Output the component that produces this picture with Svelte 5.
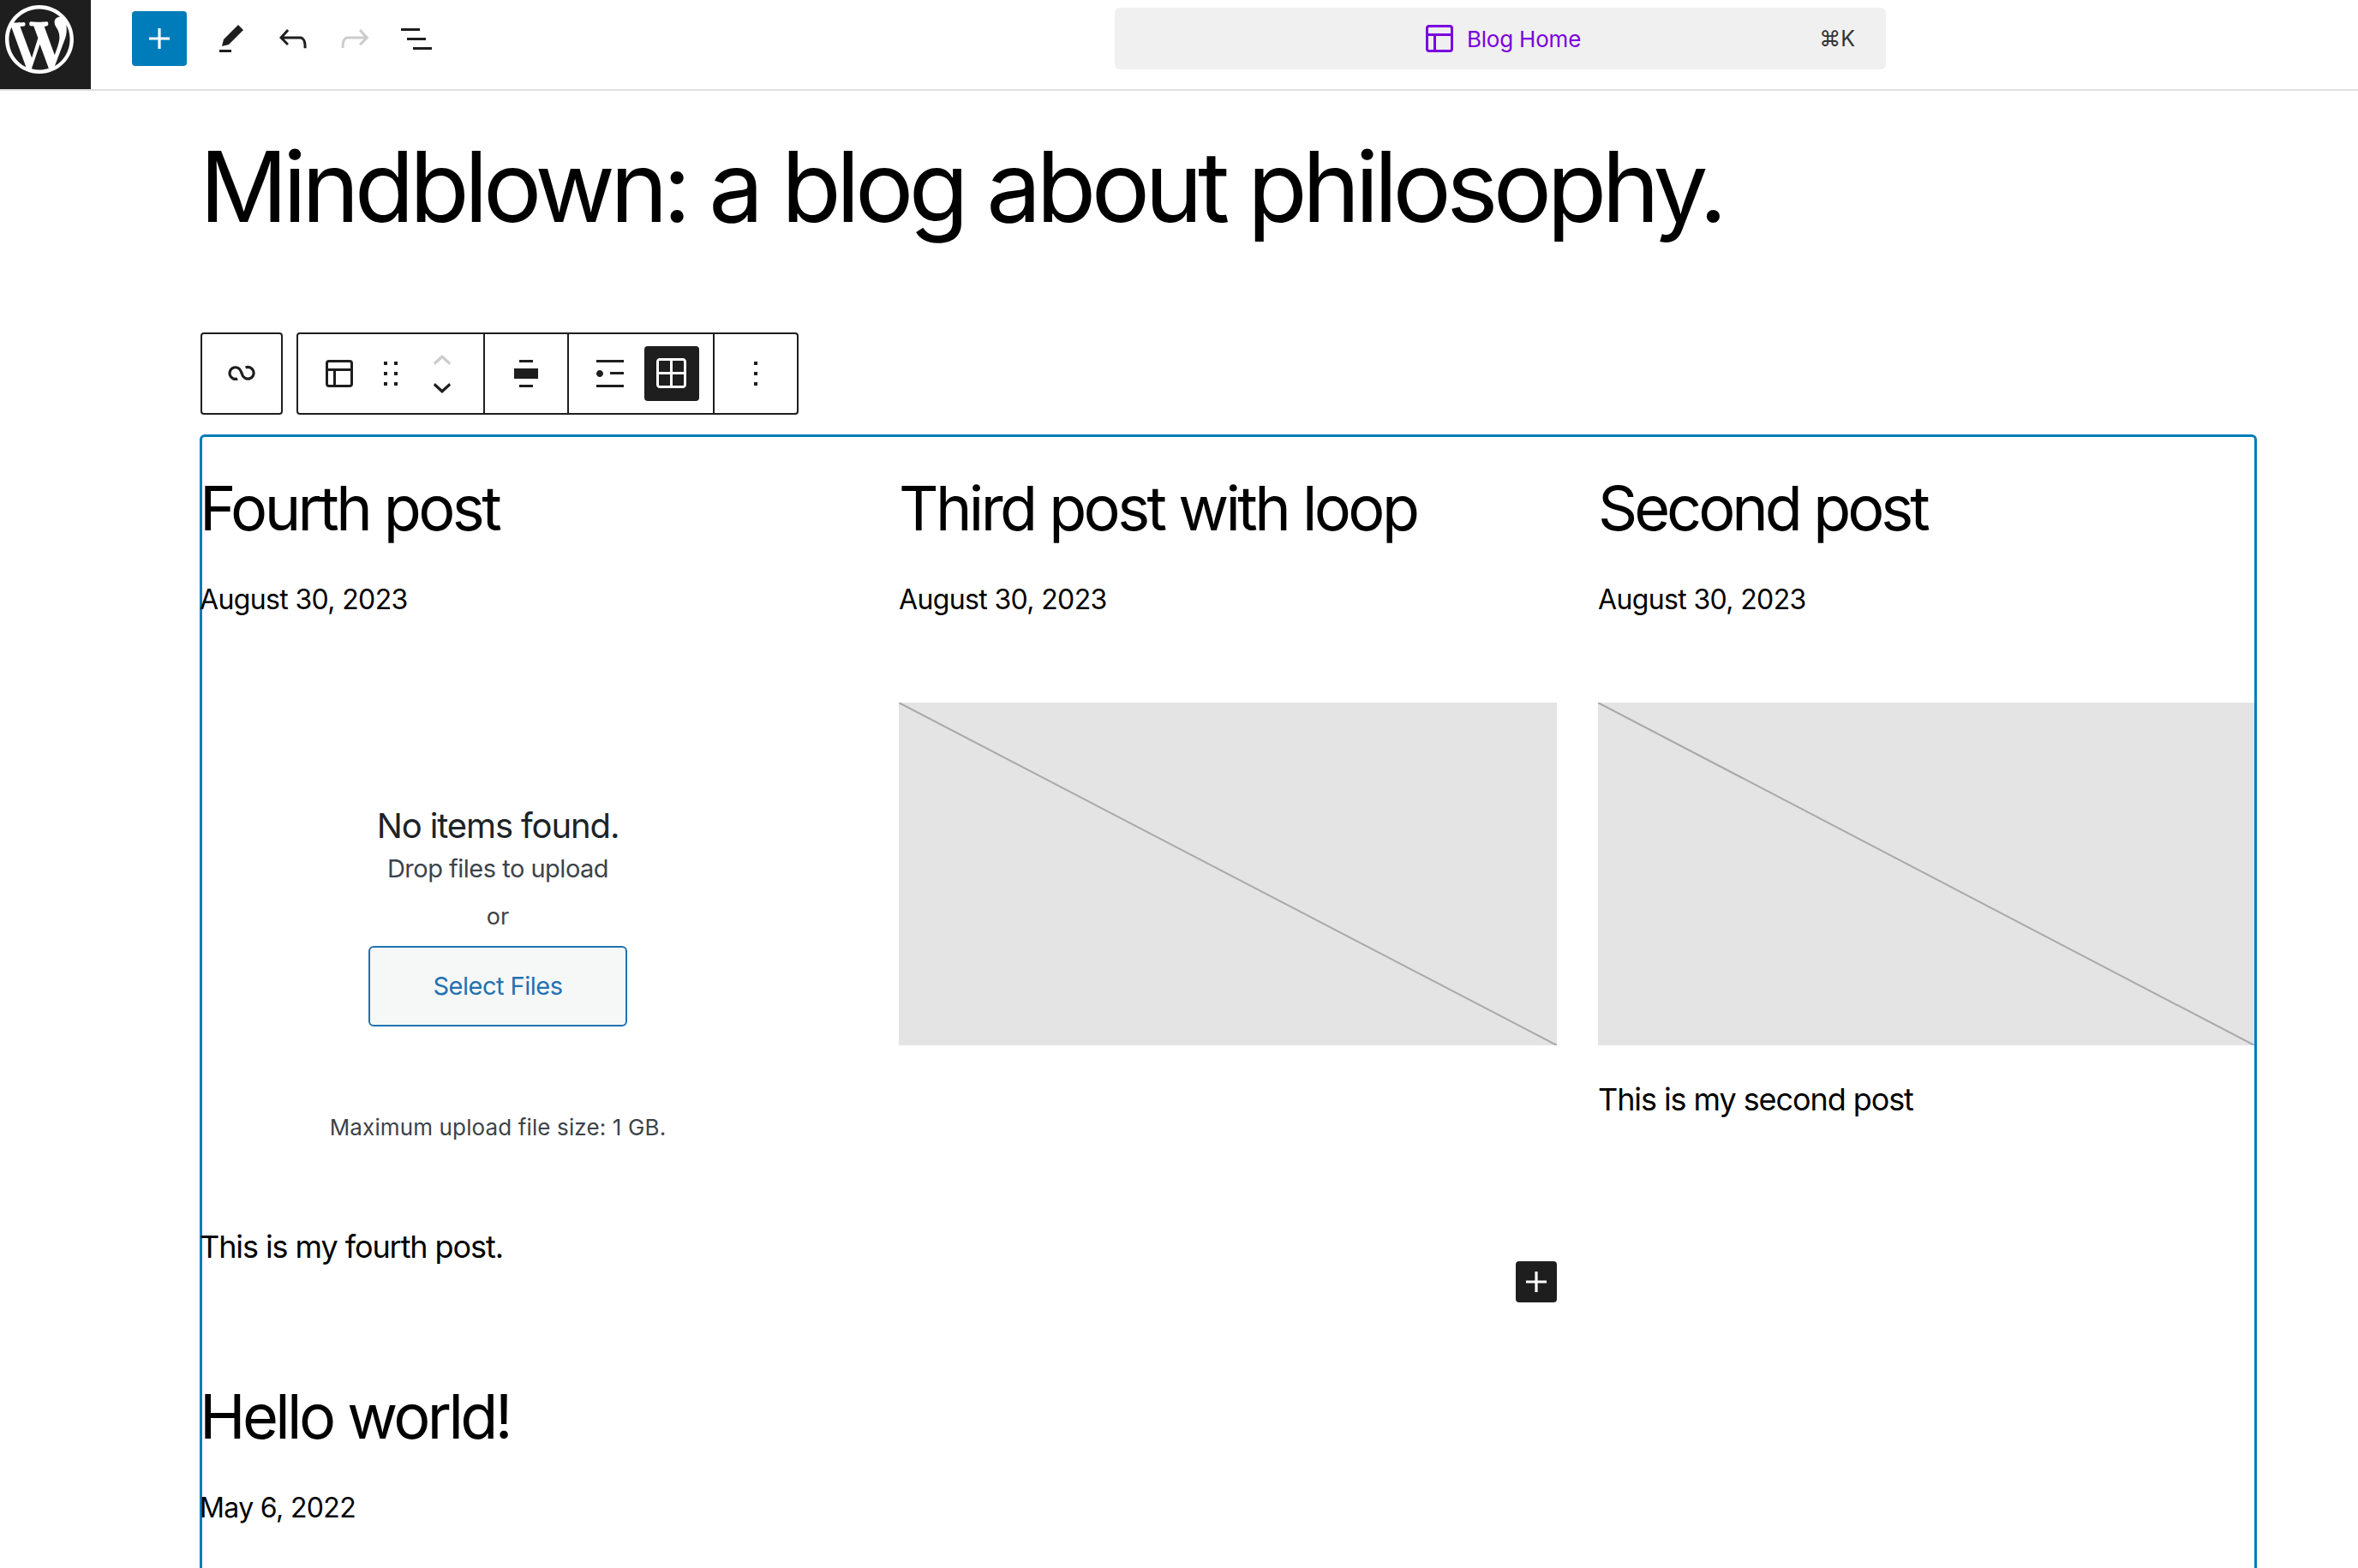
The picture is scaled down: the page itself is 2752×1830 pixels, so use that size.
<script>
  const posts = [
    { title: 'Fourth post', date: 'August 30, 2023', excerpt: 'This is my fourth post.', upload: true },
    { title: 'Third post with loop', date: 'August 30, 2023', image: true, appender: true },
    { title: 'Second post', date: 'August 30, 2023', image: true, excerpt: 'This is my second post' },
    { title: 'Hello world!', date: 'May 6, 2022' }
  ];
</script>

{#snippet icon(d, cls = '')}
  <svg class="icon {cls}" viewBox="0 0 24 24" aria-hidden="true"><path d={d} fill-rule="evenodd" /></svg>
{/snippet}

<div class="page">
  <header class="topbar">
    <div class="logo">
      <svg viewBox="-2 -2 24 24" aria-hidden="true"><path fill="#fff" d="M20 10c0-5.51-4.49-10-10-10C4.48 0 0 4.49 0 10c0 5.52 4.48 10 10 10 5.51 0 10-4.48 10-10zM7.78 15.37L4.37 6.22c.55-.02 1.17-.08 1.17-.08.5-.06.44-1.13-.06-1.11 0 0-1.45.11-2.37.11-.18 0-.37 0-.58-.01C4.12 2.69 6.87 1.11 10 1.11c2.33 0 4.45.87 6.05 2.34-.68-.11-1.65.39-1.65 1.58 0 .74.45 1.36.9 2.1.35.61.55 1.36.55 2.46 0 1.49-1.4 5-1.4 5l-3.03-8.37c.54-.02.82-.17.82-.17.5-.05.44-1.25-.06-1.22 0 0-1.44.12-2.38.12-.87 0-2.33-.12-2.33-.12-.5-.03-.56 1.2-.06 1.22l.92.08 1.26 3.41zM17.41 10c.24-.64.74-1.87.43-4.25.7 1.29 1.05 2.71 1.05 4.25 0 3.29-1.73 6.24-4.4 7.78.97-2.59 1.94-5.2 2.92-7.78zM6.1 18.09C3.12 16.65 1.11 13.53 1.11 10c0-1.3.23-2.48.72-3.59C3.25 10.3 4.67 14.2 6.1 18.09zm4.03-6.63l2.58 6.98c-.86.29-1.76.45-2.71.45-.79 0-1.57-.11-2.29-.33.81-2.38 1.62-4.74 2.42-7.1z" /></svg>
    </div>
    <div class="tools">
      <button class="add">{@render icon('M18 11.2h-5.2V6h-1.6v5.2H6v1.6h5.2V18h1.6v-5.2H18z')}</button>
      {@render icon('m19 7-3-3-8.5 8.5-1 4 4-1L19 7Zm-7 11.5H5V20h7v-1.5Z')}
      {@render icon('M18.3 11.7c-.6-.6-1.4-.9-2.3-.9H6.7l2.9-3.3-1.1-1-4.5 5L8.5 16l1-1-2.7-2.7H16c.5 0 .9.2 1.3.5 1 1 1 3.4 1 4.5v.3h1.5v-.2c0-1.5 0-4.3-1.5-5.7z')}
      {@render icon('M15.6 6.5l-1.1 1 2.9 3.3H8c-.9 0-1.7.3-2.3.9-1.4 1.5-1.4 4.2-1.4 5.6v.2h1.5v-.3c0-1.1 0-3.5 1-4.5.3-.3.7-.5 1.3-.5h9.2L14.5 15l1.1 1.1 4.6-4.6-4.6-5z', 'off')}
      {@render icon('M3 6h11v1.5H3V6Zm3.5 5.5h11V13h-11v-1.5ZM21 17H10v1.5h11V17Z')}
    </div>
    <div class="command">
      <span class="doc">
        {@render icon('M18 5.5H6a.5.5 0 00-.5.5v3h13V6a.5.5 0 00-.5-.5zm.5 5H10v8h8a.5.5 0 00.5-.5v-7.5zm-10 0h-3V18a.5.5 0 00.5.5h2.5v-8zM6 4h12a2 2 0 012 2v12a2 2 0 01-2 2H6a2 2 0 01-2-2V6a2 2 0 012-2z')}
        <span>Blog Home</span>
      </span>
      <span class="kbd">⌘K</span>
    </div>
  </header>

  <main class="content">
    <h1>Mindblown: a blog about philosophy.</h1>

    <div class="toolbar">
      <div class="group parent">
        <svg class="icon loop" viewBox="0 0 24 24" aria-hidden="true"><path d="M9.6 15A3.42 3.42 0 1 1 11.7 10.9L12.3 12.4A3.42 3.42 0 1 0 14.3 8.5" fill="none" stroke="#1e1e1e" stroke-width="1.6" /></svg>
      </div>
      <div class="group">
        <div class="seg main">
          {@render icon('M18 5.5H6a.5.5 0 00-.5.5v3h13V6a.5.5 0 00-.5-.5zm.5 5H10v8h8a.5.5 0 00.5-.5v-7.5zm-10 0h-3V18a.5.5 0 00.5.5h2.5v-8zM6 4h12a2 2 0 012 2v12a2 2 0 01-2 2H6a2 2 0 01-2-2V6a2 2 0 012-2z')}
          {@render icon('M8 7h2V5H8v2zm0 6h2v-2H8v2zm0 6h2v-2H8v2zm6-14v2h2V5h-2zm0 8h2v-2h-2v2zm0 6h2v-2h-2v2z', 'drag')}
          <div class="movers">
            <svg class="chev off" viewBox="0 0 24 14" aria-hidden="true"><path d="M12 1 1 11l2 3 9-8 9 8 2-3z" /></svg>
            <svg class="chev" viewBox="0 0 24 14" aria-hidden="true"><path d="M12 13 1 3l2-3 9 8 9-8 2 3z" /></svg>
          </div>
        </div>
        <div class="seg align">{@render icon('M8 5.5h8V4H8zM8 20h8v-1.5H8zM5 9h14v6H5z')}</div>
        <div class="seg views">
          {@render icon('M4 4v1.5h16V4H4zm8 8.5h8V11h-8v1.5zM4 20h16v-1.5H4V20zm4-8c0-1.1-.9-2-2-2s-2 .9-2 2 .9 2 2 2 2-.9 2-2z')}
          <span class="active">{@render icon('m3 5c0-1.10457.89543-2 2-2h13.5c1.1046 0 2 .89543 2 2v13.5c0 1.1046-.8954 2-2 2h-13.5c-1.10457 0-2-.8954-2-2zm2-.5h6v6.5h-6.5v-6c0-.27614.22386-.5.5-.5zm-.5 8v6c0 .2761.22386.5.5.5h6v-6.5zm8 0v6.5h6c.2761 0 .5-.2239.5-.5v-6zm0-8v6.5h6.5v-6c0-.27614-.2239-.5-.5-.5z')}</span>
        </div>
        <div class="seg more">{@render icon('M13 19h-2v-2h2v2zm0-6h-2v-2h2v2zm0-6h-2V5h2v2z')}</div>
      </div>
    </div>

    <section class="query">
      {#each posts as post}
        <article class="post">
          <h2>{post.title}</h2>
          <p class="date">{post.date}</p>
          {#if post.upload}
            <div class="upload">
              <h3>No items found.</h3>
              <p class="drop">Drop files to upload</p>
              <p class="or">or</p>
              <button class="select">Select Files</button>
              <p class="max">Maximum upload file size: 1 GB.</p>
            </div>
          {/if}
          {#if post.image}
            <div class="placeholder">
              <svg viewBox="0 0 100 100" preserveAspectRatio="none" aria-hidden="true"><line x1="0" y1="0" x2="100" y2="100" vector-effect="non-scaling-stroke" /></svg>
            </div>
          {/if}
          {#if post.excerpt}
            <p class="excerpt" class:after-upload={post.upload}>{post.excerpt}</p>
          {/if}
          {#if post.appender}
            <button class="appender">{@render icon('M18 11.2h-5.2V6h-1.6v5.2H6v1.6h5.2V18h1.6v-5.2H18z')}</button>
          {/if}
        </article>
      {/each}
    </section>
  </main>
</div>

<style>
  :global(body) { margin: 0; background: #fff; }
  .page { width: 2752px; height: 1830px; overflow: hidden; font-family: Inter, "Liberation Sans", sans-serif; color: #000; }
  button { border: 0; padding: 0; margin: 0; font: inherit; }
  .icon { width: 48px; height: 48px; flex: none; display: block; fill: #1e1e1e; }
  .icon.off { fill: #ccc; }

  .topbar { height: 104px; border-bottom: 2px solid #e0e0e0; display: flex; align-items: flex-start; position: relative; }
  .logo { width: 106px; height: 104px; background: #1e1e1e; flex: none; overflow: hidden; }
  .logo svg { width: 96px; height: 96px; margin: -2px 0 0 -2px; display: block; }
  .tools { display: flex; align-items: center; gap: 24px; margin-left: 48px; padding-top: 13px; height: 64px; }
  .add { width: 64px; height: 64px; background: #007cba; border-radius: 4px; display: flex; align-items: center; justify-content: center; margin-right: 4px; }
  .add .icon { fill: #fff; }
  .command { width: 900px; height: 72px; margin: 9px 0 0 791px; background: #f0f0f0; border-radius: 6px; position: relative; display: flex; align-items: center; justify-content: center; }
  .doc { display: flex; align-items: center; color: #7a00df; font-size: 26px; margin-left: -1px; gap: 8px; letter-spacing: -0.2px; }
  .doc .icon { fill: #7a00df; }
  .kbd { position: absolute; right: 36px; top: 50%; transform: translateY(-50%); font-size: 25px; color: #333; }

  .content { padding: 0 118px 0 233px; }
  h1 { margin: 0; padding-top: 44px; font-weight: 400; font-size: 114px; line-height: 1.2; height: 238px; letter-spacing: -0.05em; }
  .toolbar { display: flex; gap: 16px; margin-left: 1px; height: 96px; }
  .group { display: flex; border: 2px solid #1e1e1e; border-radius: 4px; height: 96px; box-sizing: border-box; }
  .parent { width: 96px; align-items: center; justify-content: center; }
  .seg { display: flex; align-items: center; height: 100%; box-sizing: border-box; border-right: 2px solid #1e1e1e; }
  .seg:last-child { border-right: 0; }
  .main { width: 218px; padding-left: 24px; gap: 12px; }
  .movers { display: flex; flex-direction: column; gap: 21px; margin-left: 13px; }
  .chev { width: 22px; height: 13px; display: block; fill: #1e1e1e; }
  .chev.off { fill: #ccc; }
  .align { width: 98px; justify-content: center; }
  .views { width: 170px; padding-left: 24px; gap: 0; }
  .active { width: 64px; height: 64px; background: #1e1e1e; border-radius: 4px; display: flex; align-items: center; justify-content: center; margin-left: 16px; }
  .active .icon { fill: #fff; }
  .more { width: 96px; justify-content: center; }

  .query { margin-top: 23px; outline: 3px solid #007cba; outline-offset: -3px; border-radius: 6px; min-height: 1400px; display: grid; grid-template-columns: 768px 768px 766px; column-gap: 48px; align-content: start; }
  .post { position: relative; }
  .post:nth-child(1) { height: 1060px; }
  h2 { margin: 0; padding-top: 43px; font-weight: 400; font-size: 72px; line-height: 1.2; letter-spacing: -0.05em; }
  .post:nth-child(3) h2 { letter-spacing: -0.056em; }
  .date { margin: 40px 0 0; font-size: 32px; line-height: 1.5; letter-spacing: -0.02em; }
  .upload { width: 696px; height: 665px; display: flex; flex-direction: column; align-items: center; color: #3c434a; margin-top: 0; }
  .upload h3 { margin: 216px 0 0; font-weight: 400; font-size: 40px; line-height: 1.2; color: #1d2327; letter-spacing: -0.028em; }
  .drop { margin: 6px 0 0; font-size: 29px; line-height: 1.4; letter-spacing: -0.5px; }
  .or { margin: 16px 0 0; font-size: 27px; line-height: 1.4; }
  .select { width: 302px; height: 94px; margin-top: 15px; box-sizing: border-box; background: #f6f7f7; border: 2px solid #2271b1; border-radius: 6px; color: #2271b1; font-size: 29px; letter-spacing: -0.5px; }
  .max { margin: 100px 0 0; font-size: 26px; line-height: 1.4; letter-spacing: 0.13px; }
  .placeholder { height: 400px; background: #e4e4e4; margin-top: 96px; }
  .placeholder svg { width: 100%; height: 100%; display: block; }
  .placeholder line { stroke: #a9a9a9; stroke-width: 2; }
  .excerpt { margin: 36px 0 0; font-size: 36px; line-height: 1.5; letter-spacing: -0.03em; }
  .excerpt.after-upload { margin-top: 39px; }
  .appender { position: absolute; right: 0; top: 965px; width: 48px; height: 48px; background: #1e1e1e; border-radius: 4px; display: flex; align-items: center; justify-content: center; }
  .appender .icon { fill: #fff; }
</style>
